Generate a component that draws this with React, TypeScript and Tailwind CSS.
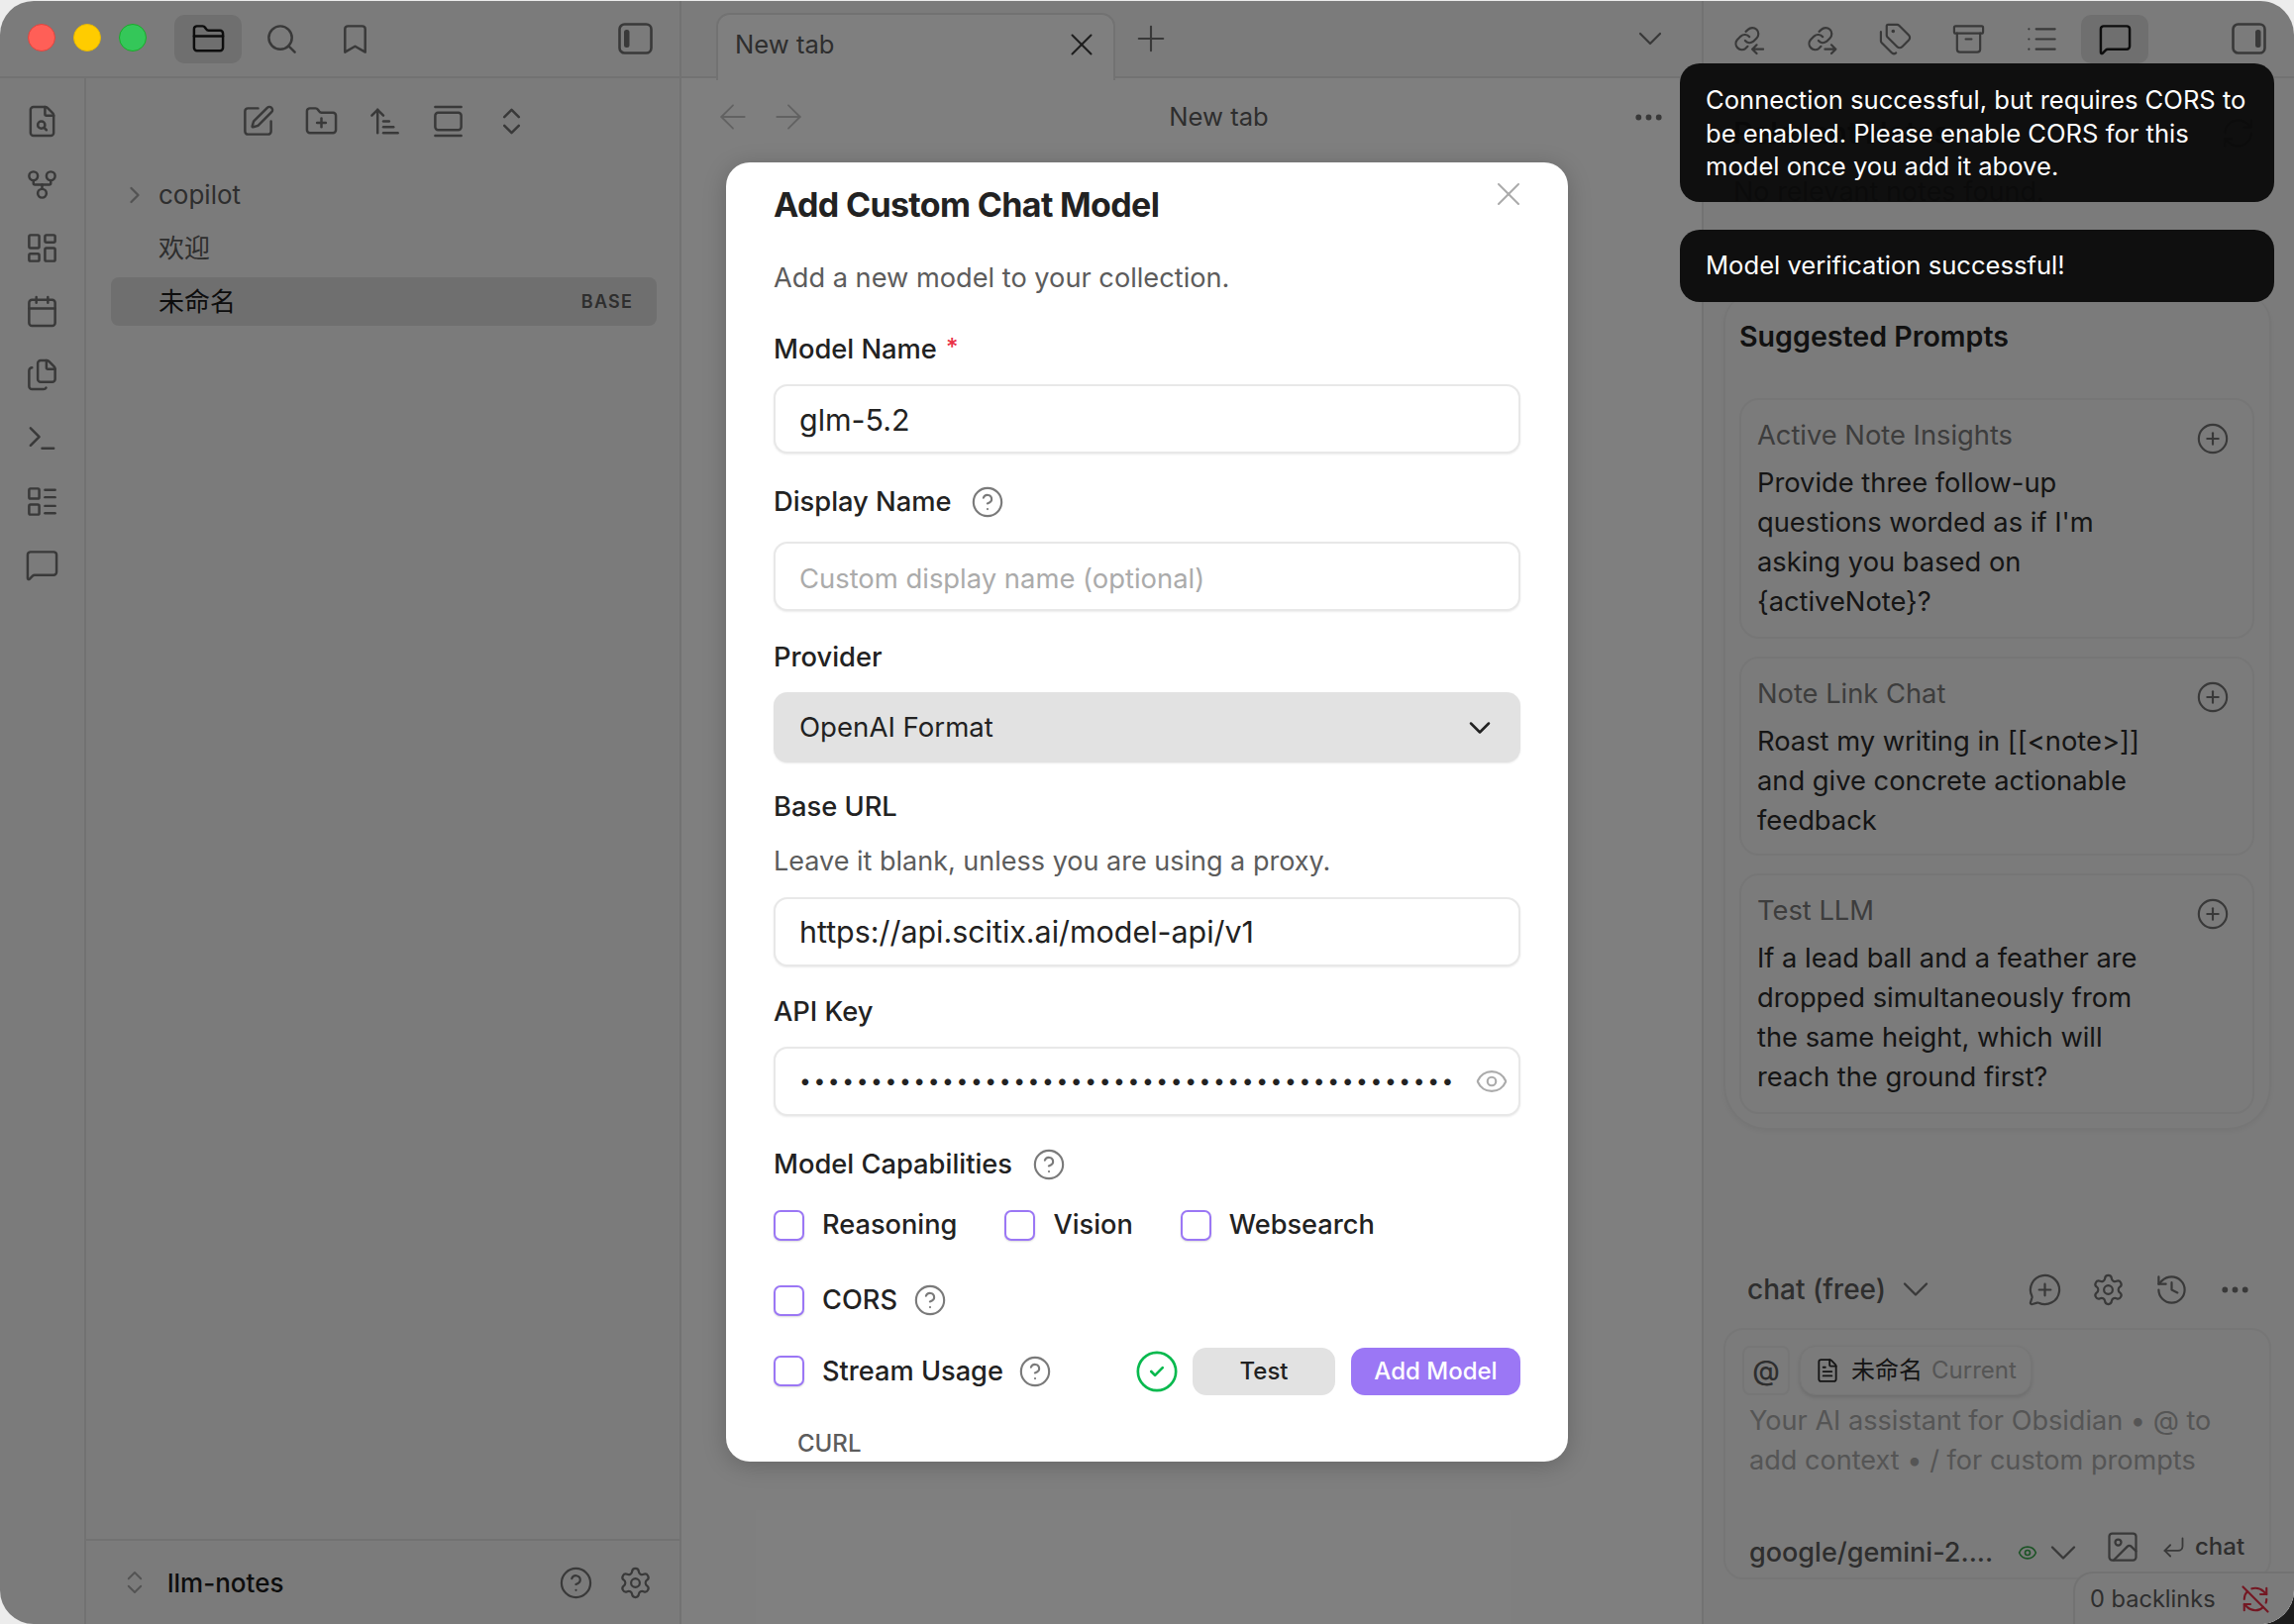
import type { ReactNode } from "react";
import {
  Archive,
  Bookmark,
  Calendar,
  ChevronDown,
  ChevronRight,
  ChevronsUpDown,
  CircleCheck,
  CircleHelp,
  CirclePlus,
  CornerDownLeft,
  Ellipsis,
  Eye,
  FileSearch,
  FileText,
  Files,
  FolderClosed,
  FolderPlus,
  GalleryVertical,
  GitFork,
  History,
  Image,
  LayoutDashboard,
  LayoutList,
  List,
  MessageCirclePlus,
  MessageSquare,
  ArrowLeft,
  ArrowRight,
  ArrowUpNarrowWide,
  Plus,
  RefreshCw,
  RefreshCwOff,
  Search,
  Settings,
  SquarePen,
  Tags,
  Terminal,
  X,
} from "lucide-react";

const icon = "w-[35px] h-[35px] shrink-0 text-[#727272]";

// ─── Custom glyphs ────────────────────────────────────────────────────────────

function PanelToggle({ side }: { side: "left" | "right" }) {
  return (
    <svg viewBox="0 0 35 32" className="w-[35px] h-8 shrink-0 text-[#727272]" fill="none">
      <rect x="1.5" y="1.5" width="32" height="29" rx="5" stroke="currentColor" strokeWidth="2.6" />
      <rect x={side === "left" ? 6 : 24} y="7" width="5.5" height="18" rx="2.5" fill="currentColor" />
    </svg>
  );
}

function LinkArrow({ dir }: { dir: "in" | "out" }) {
  return (
    <svg viewBox="0 0 24 24" className={icon} fill="none" stroke="currentColor" strokeWidth="1.5" strokeLinecap="round" strokeLinejoin="round">
      <path d="M9.5 13a4.2 4.2 0 0 0 5.6.7l2.4-2.4a4.2 4.2 0 0 0-6-5.9L10 6.8" />
      <path d="M12.5 10.4a4.2 4.2 0 0 0-6-.4l-2.5 2.5a4.2 4.2 0 0 0 5.9 5.9l1.4-1.4" />
      {dir === "in" ? <path d="M22 19h-7.5m3-3-3 3 3 3" /> : <path d="M14 19h7.5m-3-3 3 3-3 3" />}
    </svg>
  );
}

// ─── Left side ────────────────────────────────────────────────────────────────

function HeaderButton({ active, children }: { active?: boolean; children: ReactNode }) {
  return (
    <div className={`w-[68px] h-[49px] rounded-[10px] flex items-center justify-center ${active ? "bg-[#dedede]" : ""}`}>
      {children}
    </div>
  );
}

function LeftPane() {
  return (
    <div className="w-[688px] shrink-0 flex flex-col bg-[#f6f6f6] border-r-2 border-[#e4e4e4]">
      <div className="h-[78px] shrink-0 flex items-center pl-7 pr-[27px] border-b-2 border-[#e4e4e4]">
        <div className="w-[120px] shrink-0" />
        <div className="ml-7 flex items-center gap-[6px]">
          <HeaderButton active>
            <FolderClosed className="w-[35px] h-[35px] text-[#1a1a1a]" strokeWidth={1.7} />
          </HeaderButton>
          <HeaderButton>
            <Search className={icon} strokeWidth={1.7} />
          </HeaderButton>
          <HeaderButton>
            <Bookmark className={icon} strokeWidth={1.7} />
          </HeaderButton>
        </div>
        <div className="ml-auto">
          <PanelToggle side="left" />
        </div>
      </div>

      <div className="flex-1 flex min-h-0">
        <div className="w-[87px] shrink-0 flex flex-col items-center gap-[29px] pt-[26px] border-r-2 border-[#e4e4e4]">
          <FileSearch className={icon} strokeWidth={1.7} />
          <GitFork className={icon} strokeWidth={1.7} />
          <LayoutDashboard className={icon} strokeWidth={1.7} />
          <Calendar className={icon} strokeWidth={1.7} />
          <Files className={icon} strokeWidth={1.7} />
          <Terminal className={icon} strokeWidth={1.7} />
          <LayoutList className={icon} strokeWidth={1.7} />
          <MessageSquare className={icon} strokeWidth={1.7} />
        </div>

        <div className="flex-1 flex flex-col min-w-0">
          <div className="flex justify-center gap-[29px] pl-[3px] pt-[26px] pb-[32px]">
            <SquarePen className={icon} strokeWidth={1.7} />
            <FolderPlus className={icon} strokeWidth={1.7} />
            <ArrowUpNarrowWide className={icon} strokeWidth={1.7} />
            <GalleryVertical className={icon} strokeWidth={1.7} />
            <ChevronsUpDown className={icon} strokeWidth={1.7} />
          </div>
          <div className="ml-[25px] mr-[23px] flex flex-col gap-[5px] text-[26px] text-[#5c5c5c]">
            <div className="h-[49px] flex items-center pl-[12px]">
              <ChevronRight className="w-7 h-7 -ml-[2px] text-[#a6a6a6]" strokeWidth={2} />
              <span className="ml-[10px]">copilot</span>
            </div>
            <div className="h-[49px] flex items-center pl-[48px]">欢迎</div>
            <div className="h-[49px] flex items-center pl-[48px] pr-[24px] rounded-[8px] bg-[#dedede] text-[#1a1a1a]">
              未命名
              <span className="ml-auto text-[18px] font-semibold tracking-[1.2px] text-[#5c5c5c]">BASE</span>
            </div>
          </div>

          <div className="mt-auto h-[86px] flex items-center pl-[34px] pr-[27px] border-t-2 border-[#e4e4e4]">
            <ChevronsUpDown className="w-[30px] h-[30px] text-[#a6a6a6]" strokeWidth={1.5} />
            <span className="ml-[18px] text-[26px] font-medium text-[#1a1a1a]">llm-notes</span>
            <CircleHelp className={`${icon} ml-auto`} strokeWidth={1.5} />
            <Settings className={`${icon} ml-[25px]`} strokeWidth={1.5} />
          </div>
        </div>
      </div>
    </div>
  );
}

// ─── Center ───────────────────────────────────────────────────────────────────

function CenterPane() {
  return (
    <div className="flex-1 min-w-0 flex flex-col bg-white">
      <div className="h-[78px] shrink-0 flex bg-[#f6f6f6] border-b-2 border-[#e4e4e4] pl-[35px] pr-[32px]">
        <div className="mt-3 w-[403px] h-[68px] flex items-center pl-[17px] pr-[13px] pb-[6px] bg-white border-2 border-b-0 border-[#e4e4e4] rounded-t-[14px] text-[25.6px] text-[#5c5c5c]">
          New tab
          <X className="ml-auto w-[38px] h-[38px] text-[#3c3c3c]" strokeWidth={1.3} />
        </div>
        <div className="ml-[15px] h-full flex items-center">
          <Plus className="w-[42px] h-[42px] text-[#727272]" strokeWidth={1.2} />
        </div>
        <div className="ml-auto h-full flex items-center">
          <ChevronDown className="w-10 h-10 text-[#727272]" strokeWidth={1.35} />
        </div>
      </div>
      <div className="h-[78px] shrink-0 flex items-center pl-[32px] pr-[36px]">
        <ArrowLeft className="w-10 h-10 text-[#c4c4c4]" strokeWidth={1.1} />
        <ArrowRight className="ml-4 w-10 h-10 text-[#c4c4c4]" strokeWidth={1.1} />
        <span className="flex-1 pr-[2px] text-center text-[25.6px] text-[#5c5c5c]">New tab</span>
        <Ellipsis className={icon} strokeWidth={2} />
      </div>
    </div>
  );
}

// ─── Right side ───────────────────────────────────────────────────────────────

function PromptCard({ title, lines, pb }: { title: string; lines: string[]; pb: string }) {
  return (
    <div className={`relative rounded-[20px] border-2 border-[#ececec] pl-4 pr-[60px] pt-4 ${pb}`}>
      <CirclePlus className="absolute right-[23px] top-[22px] w-[34px] h-[34px] text-[#727272]" strokeWidth={1.5} />
      <div className="h-10 leading-10 text-[27.3px] text-[#7a7a7a]">{title}</div>
      <div className="mt-[8px] text-[27.3px] leading-10 text-[#2a2a2a]">
        {lines.map((l) => (
          <div key={l}>{l}</div>
        ))}
      </div>
    </div>
  );
}

function RightPane() {
  return (
    <div className="relative w-[598px] shrink-0 flex flex-col bg-[#f6f6f6] border-l-2 border-[#e4e4e4]">
      <div className="h-[78px] shrink-0 flex items-center pl-[11px] pr-[28px] border-b-2 border-[#e4e4e4]">
        <div className="flex items-center gap-[6px]">
          <HeaderButton>
            <LinkArrow dir="in" />
          </HeaderButton>
          <HeaderButton>
            <LinkArrow dir="out" />
          </HeaderButton>
          <HeaderButton>
            <Tags className={icon} strokeWidth={1.5} />
          </HeaderButton>
          <HeaderButton>
            <Archive className={icon} strokeWidth={1.5} />
          </HeaderButton>
          <HeaderButton>
            <List className={icon} strokeWidth={1.5} />
          </HeaderButton>
          <HeaderButton active>
            <MessageSquare className="w-[35px] h-[35px] text-[#1a1a1a]" strokeWidth={1.7} />
          </HeaderButton>
        </div>
        <div className="ml-auto">
          <PanelToggle side="right" />
        </div>
      </div>

      <div className="flex-1 flex flex-col pl-[20px] pr-[23px]">
        <div className="mt-[35px] h-10 flex items-center pl-[10px] pr-[16px] text-[30px] font-semibold text-[#222222]">
          Relevant Notes
          <RefreshCw className={`${icon} ml-auto`} strokeWidth={1.5} />
        </div>
        <div className="mt-[20px] h-10 pl-[10px] leading-10 text-[27px] text-[#5c5c5c]">No relevant notes found.</div>

        <div className="mt-[84px] h-[843px] shrink-0 rounded-b-[44px] rounded-t-[28px] border-2 border-t-0 border-[#ececec] pl-[14px] pr-[15px] shadow-[0_2px_4px_rgba(0,0,0,0.04)]">
          <div className="mt-[22px] h-10 leading-10 text-[28.6px] font-semibold text-[#222222]">Suggested Prompts</div>
          <div className="mt-[42px] flex flex-col gap-[18px]">
            <PromptCard
              title="Active Note Insights"
              lines={["Provide three follow-up", "questions worded as if I'm", "asking you based on", "{activeNote}?"]}
              pb="pb-[15px]"
            />
            <PromptCard
              title="Note Link Chat"
              lines={["Roast my writing in [[<note>]]", "and give concrete actionable", "feedback"]}
              pb="pb-[13px]"
            />
            <PromptCard
              title="Test LLM"
              lines={[
                "If a lead ball and a feather are",
                "dropped simultaneously from",
                "the same height, which will",
                "reach the ground first?",
              ]}
              pb="pb-[15px]"
            />
          </div>
        </div>

        <div className="mt-[141px] h-10 flex items-center pl-[24px] pr-[19px]">
          <span className="text-[28px] font-medium text-[#5c5c5c]">chat (free)</span>
          <ChevronDown className="ml-[8px] w-[44px] h-[44px] text-[#727272]" strokeWidth={1.3} />
          <MessageCirclePlus className={`${icon} ml-auto`} strokeWidth={1.5} />
          <Settings className={`${icon} ml-[29px]`} strokeWidth={1.5} />
          <History className={`${icon} ml-[29px]`} strokeWidth={1.5} />
          <Ellipsis className={`${icon} ml-[29px]`} strokeWidth={2} />
        </div>

        <div className="mt-[19px] h-[254px] shrink-0 rounded-[20px] border-2 border-[#ececec] pl-[17px] pr-[22px] pt-4">
          <div className="flex items-center gap-[10px]">
            <div className="w-[48px] h-[50px] rounded-[8px] border-2 border-[#ececec] flex items-center justify-center text-[28px] font-medium text-[#5c5c5c]">
              @
            </div>
            <div className="w-[234px] h-[50px] rounded-[16px] border border-[#ececec] bg-[#f6f6f6] shadow-[0_2px_4px_rgba(0,0,0,0.12)] pl-[14px] flex items-center">
              <FileText className="w-[26px] h-[26px] text-[#2a2a2a]" strokeWidth={1.7} />
              <span className="ml-[11px] text-[24px] text-[#2a2a2a]">未命名</span>
              <span className="ml-[9px] text-[24px] text-[#ababab]">Current</span>
            </div>
          </div>
          <div className="mt-[6px] pl-[7px] text-[27.1px] leading-10 text-[#ababab]">
            <div>Your AI assistant for Obsidian • @ to</div>
            <div>add context • / for custom prompts</div>
          </div>
          <div className="mt-[53px] pl-[7px] flex items-center h-10 whitespace-nowrap">
            <span className="w-[247px] shrink-0 text-[27px] font-medium text-[#5c5c5c]">google/gemini-2....</span>
            <Eye className="ml-[24px] shrink-0 w-5 h-5 text-[#3aa84d]" strokeWidth={2} />
            <ChevronDown className="ml-[4px] shrink-0 w-[44px] h-[44px] text-[#727272]" strokeWidth={1.3} />
            <Image className="ml-[20px] -mt-3 shrink-0 w-9 h-9 text-[#727272]" strokeWidth={1.5} />
            <CornerDownLeft className="ml-[20px] -mt-3 shrink-0 w-[27px] h-[27px] text-[#727272]" strokeWidth={1.6} />
            <span className="ml-[8px] -mt-3 text-[24px] font-medium text-[#5c5c5c]">chat</span>
          </div>
        </div>
      </div>

      <div className="absolute right-0 bottom-0 w-[223px] h-[53px] pl-[15px] pr-[24px] flex items-center bg-[#f6f6f6] border-t-2 border-l-2 border-[#e4e4e4] rounded-tl-[20px] text-[23.6px] text-[#5c5c5c]">
        0 backlinks
        <RefreshCwOff className="ml-auto w-[30px] h-[30px] text-[#e93147]" strokeWidth={1.7} />
      </div>
    </div>
  );
}

// ─── Modal ────────────────────────────────────────────────────────────────────

const label = "h-10 flex items-center text-[27.3px] font-medium text-[#222222]";
const inputBox = "h-[70px] flex items-center px-[24px] rounded-[14px] bg-white border-2 border-[#e8e8e8] shadow-[0_1px_2px_rgba(0,0,0,0.08)]";
const hintIcon = "w-[34px] h-[34px] text-[#7a7a7a]";

function Check({ text, hint, hintGap }: { text: string; hint?: boolean; hintGap?: string }) {
  return (
    <div className="flex items-center">
      <div className="w-[31px] h-[31px] rounded-[7px] border-[2.5px] border-[#9b77f5] bg-white shadow-[0_1px_2px_rgba(0,0,0,0.15)]" />
      <span className="ml-[18px] text-[27.2px] font-medium text-[#222222]">{text}</span>
      {hint && <CircleHelp className={`${hintIcon} ${hintGap}`} strokeWidth={1.5} />}
    </div>
  );
}

function Modal() {
  return (
    <div className="absolute left-[733px] top-[164px] w-[850px] h-[1312px] overflow-hidden rounded-[24px] bg-white px-[48px] shadow-[0_4px_24px_rgba(0,0,0,0.2)]">
      <X className="absolute right-[40px] top-[12px] w-10 h-10 text-[#ababab]" strokeWidth={1.2} />
      <div className="mt-[18px] h-12 flex items-center text-[34px] font-bold tracking-[-0.65px] text-[#222222]">Add Custom Chat Model</div>
      <div className="mt-[31px] h-10 flex items-center text-[27.2px] text-[#5c5c5c]">Add a new model to your collection.</div>

      <div className={`mt-[32px] ${label}`}>
        Model Name<span className="ml-[9px] -mt-1 text-[24px] text-[#e93147]">*</span>
      </div>
      <div className={`mt-[15px] ${inputBox} pt-[3px] text-[30.4px] text-[#222222]`}>glm-5.2</div>

      <div className={`mt-[29px] ${label}`}>
        Display Name
        <CircleHelp className={`${hintIcon} ml-[19px]`} strokeWidth={1.5} />
      </div>
      <div className={`mt-[20px] ${inputBox} pt-[6px] text-[27.4px] text-[#ababab]`}>Custom display name (optional)</div>

      <div className={`mt-[27px] ${label}`}>Provider</div>
      <div className="mt-[15px] h-[71px] flex items-center pl-[26px] pr-[23px] rounded-[14px] bg-[#e2e2e2] shadow-[0_1px_2px_rgba(0,0,0,0.08)] text-[27.6px] text-[#222222]">
        OpenAI Format
        <ChevronDown className="ml-auto w-9 h-9 text-[#222222]" strokeWidth={1.7} />
      </div>

      <div className={`mt-[25px] ${label}`}>Base URL</div>
      <div className="mt-[15px] h-10 flex items-center text-[27px] text-[#5c5c5c]">Leave it blank, unless you are using a proxy.</div>
      <div className={`mt-[16px] ${inputBox} pt-[2px] text-[30.4px] text-[#222222]`}>https://api.scitix.ai/model-api/v1</div>

      <div className={`mt-[26px] ${label}`}>API Key</div>
      <div className={`mt-[15px] ${inputBox} pr-[10px]`}>
        <span className="whitespace-nowrap text-[21px] tracking-[2.6px] text-[#222222]">{"•".repeat(46)}</span>
        <Eye className="ml-auto w-[34px] h-[34px] text-[#ababab]" strokeWidth={1.5} />
      </div>

      <div className={`mt-[29px] ${label}`}>
        Model Capabilities
        <CircleHelp className={`${hintIcon} ml-[20px]`} strokeWidth={1.5} />
      </div>
      <div className="mt-[21px] h-10 flex items-center gap-[48px]">
        <Check text="Reasoning" />
        <Check text="Vision" />
        <Check text="Websearch" />
      </div>
      <div className="mt-[36px] h-10 flex items-center">
        <Check text="CORS" hint hintGap="ml-[16px]" />
      </div>
      <div className="mt-[28px] h-12 flex items-center">
        <Check text="Stream Usage" hint hintGap="ml-[15px]" />
        <CircleCheck className="ml-auto w-[46px] h-[46px] text-[#08b94e]" strokeWidth={1.4} />
        <div className="ml-[13px] w-[144px] h-12 rounded-[14px] bg-[#e2e2e2] flex items-center justify-center text-[24px] font-medium text-[#222222]">
          Test
        </div>
        <div className="ml-[16px] w-[171px] h-12 rounded-[14px] bg-[#9b77f5] flex items-center justify-center text-[24px] font-medium text-white">
          Add Model
        </div>
      </div>
      <div className="mt-[29px] h-10 pl-[24px] flex items-center text-[24px] font-medium text-[#5c5c5c]">CURL</div>
    </div>
  );
}

// ─── Page ─────────────────────────────────────────────────────────────────────

export default function App() {
  return (
    <div className="w-[2316px] h-[1640px] overflow-hidden bg-[#ececec] font-[Inter,'Noto_Sans_CJK_SC',sans-serif]">
      <div className="relative h-full pt-[1px]">
        {/* the desktop shows dark through the bottom right corner */}
        <div className="absolute right-0 bottom-0 w-10 h-10 bg-[#1c1c1c]" />
        <div className="relative h-full flex overflow-hidden rounded-[34px]">
          <LeftPane />
          <CenterPane />
          <RightPane />
          {/* dim layer behind the dialog */}
          <div className="absolute inset-0 bg-black/50" />
        </div>

        {/* window controls stay bright above the dim layer */}
        <div className="absolute left-7 top-[24px] flex items-center gap-[18px]">
          <div className="w-7 h-7 rounded-full bg-[#ff5f57] border border-[#e0443e]" />
          <div className="w-7 h-7 rounded-full bg-[#ffcc00] border border-[#e6b800]" />
          <div className="w-7 h-7 rounded-full bg-[#34c759] border border-[#1aab29]" />
        </div>

        <Modal />

        <div className="absolute left-[1696px] top-[64px] w-[600px] h-[140px] rounded-[20px] bg-[#0a0a0a]/95 pl-[26px] pr-[16px] pt-[20px] text-[25.6px] leading-[33.5px] text-white">
          Connection successful, but requires CORS to
          <br />
          be enabled. Please enable CORS for this
          <br />
          model once you add it above.
        </div>
        <div className="absolute left-[1696px] top-[232px] w-[600px] h-[73px] rounded-[20px] bg-[#0a0a0a]/95 pl-[26px] flex items-center text-[25.6px] text-white">
          Model verification successful!
        </div>
      </div>
    </div>
  );
}
